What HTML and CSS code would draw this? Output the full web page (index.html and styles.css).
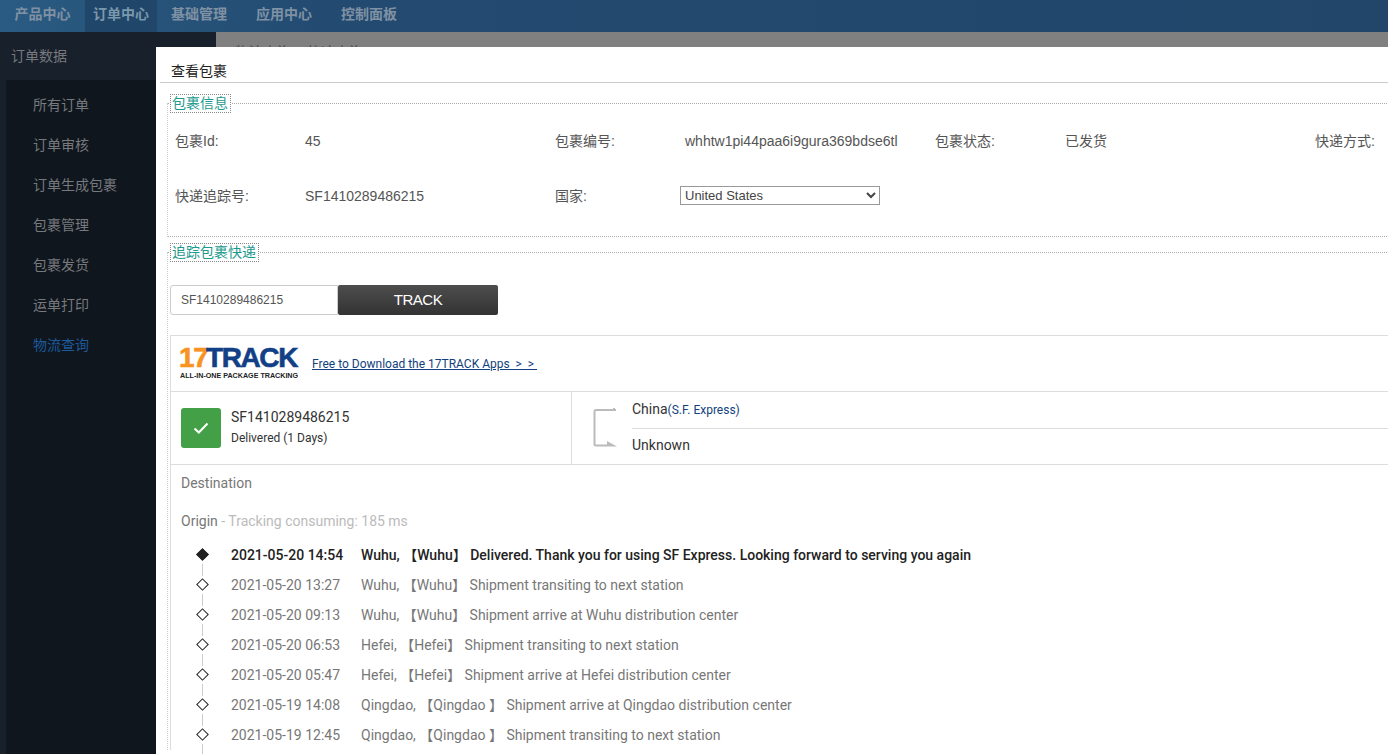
FILE: index.html
```html
<!DOCTYPE html>
<html lang="zh">
<head>
<meta charset="utf-8">
<title>查看包裹</title>
<link rel="stylesheet" href="styles.css">
</head>
<body>
<nav class="topnav">
  <a class="tab tab-1">产品中心</a>
  <a class="tab tab-active">订单中心</a>
  <a class="tab tab-3">基础管理</a>
  <a class="tab tab-4">应用中心</a>
  <a class="tab tab-3">控制面板</a>
</nav>
<div class="main">
  <aside class="sidebar">
    <div class="side-title">订单数据</div>
    <ul class="side-menu">
      <li>所有订单</li>
      <li>订单审核</li>
      <li>订单生成包裹</li>
      <li>包裹管理</li>
      <li>包裹发货</li>
      <li>运单打印</li>
      <li class="side-active">物流查询</li>
    </ul>
  </aside>
  <div class="backdrop"><span class="crumb">物流查询 &gt; 轨迹查询</span></div>
</div>
<section class="dialog">
  <h1 class="dialog-title">查看包裹</h1>
  <fieldset class="group group-info">
    <legend>包裹信息</legend>
    <div class="info-grid">
      <span>包裹Id:</span><span>45</span>
      <span>包裹编号:</span><span>whhtw1pi44paa6i9gura369bdse6tl</span>
      <span>包裹状态:</span><span>已发货</span>
      <span>快递方式:</span><span></span>
      <span>快递追踪号:</span><span>SF1410289486215</span>
      <span>国家:</span>
      <span class="select-cell"><select class="country"><option>United States</option></select></span>
    </div>
  </fieldset>
  <fieldset class="group group-track">
    <legend>追踪包裹快递</legend>
    <div class="track-form">
      <input class="track-input" type="text" value="SF1410289486215">
      <button class="track-btn" type="button">TRACK</button>
    </div>
    <div class="result">
      <div class="result-head">
        <div class="logo">
          <div class="logo-main"><span class="logo-17">17</span><span class="logo-track">TRACK</span></div>
          <div class="logo-sub">ALL-IN-ONE PACKAGE TRACKING</div>
        </div>
        <a class="app-link">Free to Download the 17TRACK Apps &nbsp;&gt; &nbsp;&gt;&nbsp;</a>
      </div>
      <div class="summary">
        <div class="summary-left">
          <div class="status-icon">
            <svg width="16" height="12" viewBox="0 0 16 12"><path d="M1.5 6.5 L5.8 10.5 L14.5 1.5" fill="none" stroke="#fff" stroke-width="2"/></svg>
          </div>
          <div class="summary-text">
            <div class="track-no">SF1410289486215</div>
            <div class="track-state">Delivered (1 Days)</div>
          </div>
        </div>
        <div class="summary-right">
          <svg class="route-icon" width="24" height="42" viewBox="0 0 24 42">
            <path d="M23 2 H3 Q1.500 2 1.500 3.500 V36 Q1.500 37.500 3 37.500 H14" fill="none" stroke="#bbb" stroke-width="2"/>
            <path d="M14 33 L24 38.500 H14 Z" fill="#bbb"/>
            <path d="M21 0 V3" stroke="#bbb" stroke-width="2"/>
          </svg>
          <div class="route">
            <div class="route-from">China<span class="carrier">(S.F. Express)</span></div>
            <div class="route-to">Unknown</div>
          </div>
        </div>
      </div>
      <div class="dest">Destination</div>
      <div class="origin">Origin <span class="consume">- Tracking consuming: 185 ms</span></div>
      <ol class="events">
        <li class="event event-latest"><time>2021-05-20 14:54</time><span>Wuhu, 【Wuhu】 Delivered. Thank you for using SF Express. Looking forward to serving you again</span></li>
        <li class="event"><time>2021-05-20 13:27</time><span>Wuhu, 【Wuhu】 Shipment transiting to next station</span></li>
        <li class="event"><time>2021-05-20 09:13</time><span>Wuhu, 【Wuhu】 Shipment arrive at Wuhu distribution center</span></li>
        <li class="event"><time>2021-05-20 06:53</time><span>Hefei, 【Hefei】 Shipment transiting to next station</span></li>
        <li class="event"><time>2021-05-20 05:47</time><span>Hefei, 【Hefei】 Shipment arrive at Hefei distribution center</span></li>
        <li class="event"><time>2021-05-19 14:08</time><span>Qingdao, 【Qingdao 】 Shipment arrive at Qingdao distribution center</span></li>
        <li class="event"><time>2021-05-19 12:45</time><span>Qingdao, 【Qingdao 】 Shipment transiting to next station</span></li>
      </ol>
    </div>
  </fieldset>
</section>
</body>
</html>
```
FILE: styles.css
```css
* { box-sizing: border-box; }
html, body { margin: 0; height: 100%; overflow: hidden; }
body {
  position: relative;
  display: flex;
  flex-direction: column;
  font: 14px "Liberation Sans", "Noto Sans CJK SC", sans-serif;
  background: #808080;
  color: #555;
}
.topnav {
  display: flex;
  height: 32px;
  flex: none;
  background: linear-gradient(90deg, #2a5b82 0, #234a70 25%, #21466a 100%);
}
.tab {
  line-height: 29px;
  text-align: center;
  color: #7f91a3;
  font-weight: bold;
}
.tab-1 { width: 85px; }
.tab-active { width: 72px; background: #20466a; color: #7a98ac; }
.tab-3 { width: 84px; }
.tab-4 { width: 86px; }
.main { flex: 1; display: flex; min-height: 0; }
.sidebar {
  width: 216px;
  flex: none;
  background: #18202c;
  color: #77797d;
}
.side-title { height: 48px; line-height: 48px; padding-left: 11px; }
.side-menu {
  list-style: none;
  margin: 0 0 0 6px;
  padding: 0;
  height: 100%;
  background: #0f161e;
}
.side-menu li { height: 40px; line-height: 50px; padding-left: 27px; }
.side-menu .side-active { color: #1c5a9c; }
.backdrop { flex: 1; background: #808080; padding: 9px 0 0 19px; color: #4b4b4b; }
.dialog {
  position: absolute;
  left: 156px;
  right: 0;
  top: 47px;
  bottom: 0;
  overflow: hidden;
  background: #fff;
  padding-left: 4px;
}
.dialog-title {
  margin: 0;
  height: 36px;
  padding: 16px 0 0 11px;
  line-height: 16px;
  font-size: 14px;
  font-weight: normal;
  color: #222;
  border-bottom: 1px solid #ccc;
}
.group {
  margin: 0 0 0 7px;
  padding: 0;
  border: 0;
  border-top: 1px dotted #aaa;
  border-left: 1px dotted #ccc;
  min-width: 0;
  width: 1300px;
}
.group legend {
  margin-left: 2px;
  padding: 0 2px 0 1px;
  height: 19px;
  line-height: 17px;
  font-size: 14px;
  color: #1c9a8e;
  border: 1px dotted #888;
}
.group-info {
  margin-top: 11px;
  height: 143px;
  border-bottom: 1px dotted #aaa;
}
.group-track { margin-top: 6px; }
.info-grid {
  display: grid;
  grid-template-columns: 130px 250px 130px 250px 130px 250px 130px 30px;
  grid-auto-rows: 55px;
  padding: 17px 0 0 7px;
  margin-top: -9px;
  white-space: nowrap;
}
.info-grid span { line-height: 41px; }
.select-cell { display: flex; align-items: flex-start; padding-top: 10px; margin-left: -5px; }
.country {
  width: 200px;
  height: 19px;
  font: 13px "Liberation Sans", sans-serif;
  color: #444;
  background: #fff;
  border: 1px solid #999;
  border-radius: 0;
  padding: 0;
}
.track-form { display: flex; margin: 23px 0 0 2px; height: 30px; }
.track-input {
  width: 168px;
  height: 30px;
  border: 1px solid #ccc;
  border-radius: 3px 0 0 3px;
  padding: 0 10px;
  font: 12px "Liberation Sans", sans-serif;
  color: #555;
}
.track-btn {
  width: 160px;
  height: 30px;
  border: 0;
  border-radius: 2px;
  padding: 0 0 2px;
  background: linear-gradient(#4d4d4d, #333);
  color: #fff;
  font: 15px "Liberation Sans", sans-serif;
  letter-spacing: -.5px;
}
.result {
  margin: 20px 0 0 2px;
  border-top: 1px solid #ddd;
  border-left: 1px solid #ddd;
  font-family: Roboto, "Noto Sans CJK SC", sans-serif;
}
.result-head { display: flex; height: 56px; border-bottom: 1px solid #ddd; padding: 11px 0 0 8px; }
.logo { width: 133px; flex: none; }
.logo-main {
  height: 22px;
  font: bold 28px/22px "Liberation Sans", sans-serif;
  letter-spacing: -1.400px;
  white-space: nowrap;
  -webkit-text-stroke: .6px;
}
.logo-17, .logo-track { display: inline-block; }
.logo-17 { color: #f7931e; width: 27px; }
.logo-track { color: #123f85; }
.logo-sub { font: bold 7.150px/8px "Liberation Sans", sans-serif; color: #222; white-space: nowrap; margin: 3px 0 0 1px; }
.app-link { color: #123f7d; font-size: 12px; line-height: 15px; text-decoration: underline; margin-top: 10px; white-space: nowrap; }
.summary { display: flex; height: 73px; border-bottom: 1px solid #ddd; }
.summary-left { width: 401px; display: flex; align-items: center; padding: 0 0 0 10px; border-right: 1px solid #ddd; flex: none; }
.status-icon {
  width: 40px;
  height: 40px;
  margin-right: 10px;
  background: #43a047;
  border-radius: 3px;
  display: flex;
  align-items: center;
  justify-content: center;
  flex: none;
}
.summary-text { margin-top: -2px; }
.track-no { color: #333; font-size: 14px; line-height: 22px; }
.track-state { color: #333; font-size: 12px; line-height: 20px; }
.summary-right { display: flex; flex: 1; padding-left: 21px; }
.route-icon { margin-top: 16px; flex: none; }
.route { margin-left: 15px; flex: 1; }
.route-from { height: 37px; line-height: 34px; color: #333; border-bottom: 1px solid #ddd; }
.carrier { color: #123f7d; font-size: 12px; }
.route-to { line-height: 32px; color: #333; }
.dest { padding-left: 10px; line-height: 20px; margin-top: 8px; color: #777; }
.origin { padding-left: 10px; line-height: 20px; margin-top: 18px; color: #777; }
.consume { color: #bbb; }
.events { list-style: none; margin: 9px 0 0; padding: 0; }
.event {
  position: relative;
  display: flex;
  height: 30px;
  line-height: 30px;
  padding-left: 60px;
  color: #777;
  white-space: nowrap;
}
.event time { width: 130px; flex: none; }
.event::before {
  content: "";
  position: absolute;
  left: 27px;
  top: 10px;
  width: 7px;
  height: 7px;
  background: #fff;
  border: 1px solid #222;
  transform: rotate(45deg);
  z-index: 1;
}
.event::after {
  content: "";
  position: absolute;
  left: 31px;
  top: 24px;
  height: 12px;
  border-left: 1px solid #ccc;
}
.event-latest { color: #222; font-weight: 500; }
.event-latest::before { background: #222; }
```
